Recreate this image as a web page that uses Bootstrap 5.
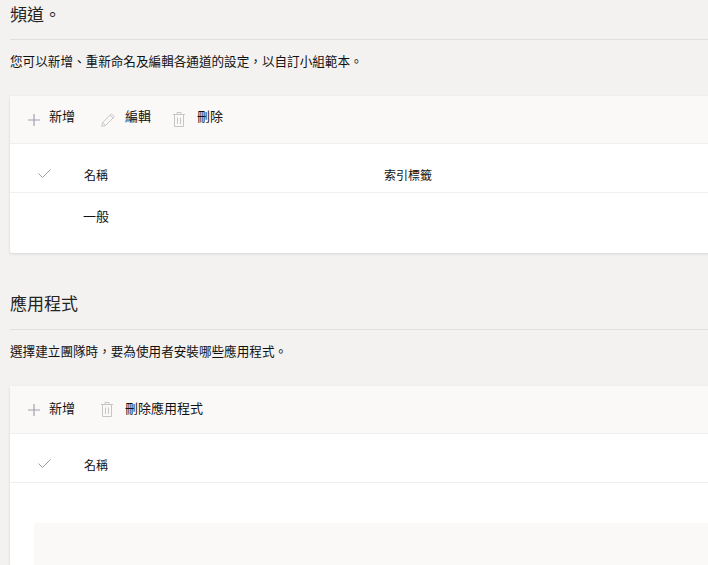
<!DOCTYPE html>
<html lang="zh-Hant">
<head>
<meta charset="utf-8">
<title>頻道</title>
<link href="https://cdn.jsdelivr.net/npm/bootstrap@5.3.0/dist/css/bootstrap.min.css" rel="stylesheet">
<style>
html, body { height: 565px; overflow: hidden; }
body { background: #f3f2f1; color: #111; font-family: "Liberation Sans", "Noto Sans CJK TC", sans-serif; font-size: 12px; line-height: 16px; }
.pg { padding-left: 10px; width: 720px; }
.pn { font-family: "Noto Sans CJK JP", sans-serif; line-height: 0; }
.sec-head { font-size: 17px; line-height: 22px; font-weight: 400; margin: 0; padding-top: 1px; padding-bottom: 12px; border-bottom: 1px solid #e1dfdd; color: #252423; }
.first-head { padding-top: 5px; }
.second-head { margin-top: 41px; padding-top: 0; padding-bottom: 13px; }
.sec-desc { margin: 14px 0 26px; font-size: 12.6px; }
.panel { background: #fff; border-radius: 2px 0 0 2px; box-shadow: 0 1px 3px rgba(0,0,0,.12); }
.tool-bar { background: #faf9f8; height: 48px; border-bottom: 1px solid #f0efee; padding-left: 18px; font-size: 13px; }
.tool { color: #111; margin-right: 26px; }
.tool span { margin-bottom: 5px; }
.tool-low .tool span { margin-bottom: 1px; }
.ic-plus { flex: none; margin-right: 9px; }
.ic-pen { flex: none; margin-right: 10px; }
.ic-bin { flex: none; margin-right: 12px; }
.tool-nar { margin-right: 22px; }
.hdr-row { height: 49px; border-bottom: 1px solid #f0efee; padding-top: 24px; }
.chk { width: 74px; padding-left: 28px; }
.chk svg { display: block; margin-top: 1px; }
.col-name { width: 300px; }
.body-row { height: 60px; padding: 16px 0 0 73px; font-size: 13px; }
.tall { height: 83px; padding: 40px 0 0 24px; }
.ghost { background: #faf9f8; height: 60px; border-radius: 2px; }
</style>
</head>
<body>
<div class="pg">
  <h2 class="sec-head first-head">頻道<span class="pn">。</span></h2>
  <p class="sec-desc">您可以新增<span class="pn">、</span>重新命名及編輯各通道的設定<span class="pn">，</span>以自訂小組範本<span class="pn">。</span></p>
  <div class="panel">
    <div class="tool-bar d-flex align-items-center">
      <div class="tool d-flex align-items-center">
        <svg class="ic-plus" width="12" height="12" viewBox="0 0 12 12"><path d="M6 0v12M0 6h12" stroke="#a09fb2" stroke-width="1.2" fill="none"/></svg>
        <span>新增</span>
      </div>
      <div class="tool tool-nar d-flex align-items-center">
        <svg class="ic-pen" width="14" height="14" viewBox="0 0 14 14"><path d="M.7 13.3l.9-3.8L10.4.9l2.9 2.9-8.7 8.7zM1.6 9.5l2.9 2.9M9.2 2.2l2.8 2.8" stroke="#c8c6c4" stroke-width="1" fill="none"/></svg>
        <span>編輯</span>
      </div>
      <div class="tool d-flex align-items-center">
        <svg class="ic-bin" width="12" height="15" viewBox="0 0 12 15"><path d="M0 2.5h12M4 2.5V.5h4v2M1.5 2.5v12h9v-12M4.5 5.5v6.5M7.5 5.5v6.5" stroke="#c8c6c4" stroke-width="1" fill="none"/></svg>
        <span>刪除</span>
      </div>
    </div>
    <div class="hdr-row d-flex">
      <div class="chk"><svg width="13" height="9" viewBox="0 0 13 9"><path d="M.5 4.5l4 4 8-8" stroke="#a19f9d" stroke-width="1" fill="none"/></svg></div>
      <div class="col-name">名稱</div>
      <div>索引標籤</div>
    </div>
    <div class="body-row">一般</div>
  </div>
  <h2 class="sec-head second-head">應用程式</h2>
  <p class="sec-desc">選擇建立團隊時<span class="pn">，</span>要為使用者安裝哪些應用程式<span class="pn">。</span></p>
  <div class="panel">
    <div class="tool-bar tool-low d-flex align-items-center">
      <div class="tool d-flex align-items-center">
        <svg class="ic-plus" width="12" height="12" viewBox="0 0 12 12"><path d="M6 0v12M0 6h12" stroke="#a09fb2" stroke-width="1.2" fill="none"/></svg>
        <span>新增</span>
      </div>
      <div class="tool d-flex align-items-center">
        <svg class="ic-bin" width="12" height="15" viewBox="0 0 12 15"><path d="M0 2.5h12M4 2.5V.5h4v2M1.5 2.5v12h9v-12M4.5 5.5v6.5M7.5 5.5v6.5" stroke="#c8c6c4" stroke-width="1" fill="none"/></svg>
        <span>刪除應用程式</span>
      </div>
    </div>
    <div class="hdr-row d-flex">
      <div class="chk"><svg width="13" height="9" viewBox="0 0 13 9"><path d="M.5 4.5l4 4 8-8" stroke="#a19f9d" stroke-width="1" fill="none"/></svg></div>
      <div class="col-name">名稱</div>
    </div>
    <div class="tall"><div class="ghost"></div></div>
  </div>
</div>
</body>
</html>
